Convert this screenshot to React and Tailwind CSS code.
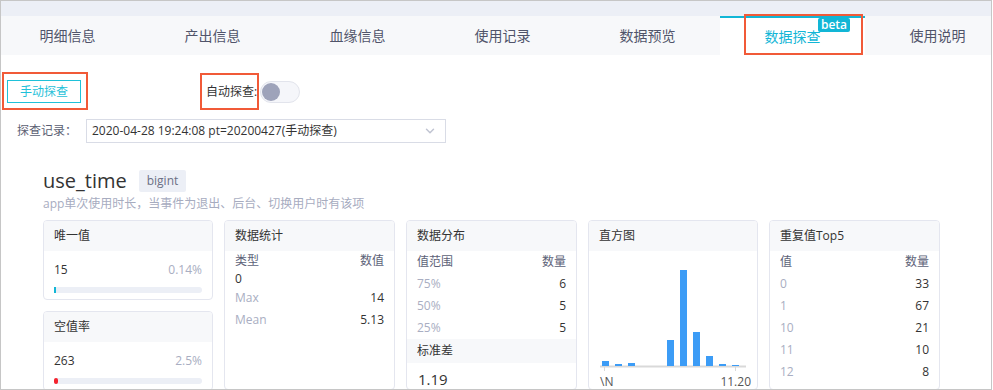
import React from "react";
import { ChevronDown } from "lucide-react";

const tabs = ["明细信息", "产出信息", "血缘信息", "使用记录", "数据预览", "数据探查", "使用说明"];

const bars = [
	{ x: 13, h: 5 },
	{ x: 26, h: 2 },
	{ x: 39, h: 3 },
	{ x: 78, h: 26 },
	{ x: 91, h: 96 },
	{ x: 104, h: 34 },
	{ x: 117, h: 10 },
	{ x: 130, h: 2 },
	{ x: 143, h: 1 },
];

const Card = ({ title, className = "", children }) => (
	<div className={`overflow-hidden rounded-[4px] border border-[#e4e6ef] bg-white ${className}`}>
		<div className="flex h-[30px] items-center bg-[#f7f8fa] px-[10px] text-[12px] text-[#333]">
			{title}
		</div>
		{children}
	</div>
);

const Row = ({ left, right, muted = true, className = "h-[22px]" }) => (
	<div className={`flex items-center justify-between text-[12px] ${className}`}>
		<span className={muted ? "text-[#a9aec2]" : "text-[#5d6278]"}>{left}</span>
		<span className={muted ? "text-[#333]" : "text-[#5d6278]"}>{right}</span>
	</div>
);

const Histogram = () => (
	<svg width="168" height="140" viewBox="0 0 168 140">
		<line x1="11" y1="115.5" x2="157" y2="115.5" stroke="#d9d9d9" strokeWidth="2" />
		<line x1="15.5" y1="116" x2="15.5" y2="120" stroke="#d9d9d9" />
		<line x1="146.5" y1="116" x2="146.5" y2="120" stroke="#d9d9d9" />
		{bars.map((b) => (
			<rect key={b.x} x={b.x} y={115 - b.h} width="7" height={b.h} fill="#3c9cf6" />
		))}
		<text x="11" y="135" fontSize="12" fill="#555" fontFamily="'Open Sans', sans-serif">\N</text>
		<text x="162" y="135" fontSize="12" fill="#555" textAnchor="end" fontFamily="'Open Sans', sans-serif">11.20</text>
	</svg>
);

const App = () => {
	return (
		<div
			className="relative h-[390px] w-[992px] overflow-hidden border border-[#c6c6c6] bg-white"
			style={{ fontFamily: "'Open Sans', 'Noto Sans CJK SC', sans-serif" }}
		>
			<div className="h-[15px] bg-[#eceff6]"></div>
			<div className="flex h-[39px] bg-[#f7f8fa] -ml-[6px]">
				{tabs.map((t, i) => (
					<div
						key={t}
						className={`relative flex w-[145px] shrink-0 items-center justify-center text-[14px] ${
							i === 5
								? "border-t-2 border-[#12b6d6] bg-white text-[#12b6d6]"
								: "text-[#50546a]"
						}`}
					>
						{t}
						{i === 5 && (
							<span className="absolute right-[15px] top-[0px] rounded-[2px] bg-[#12b6d6] px-[3px] text-[12px] font-semibold leading-[14px] text-white">
								beta
							</span>
						)}
					</div>
				))}
			</div>

			<div className="mt-[25px] flex items-center">
				<button className="ml-[6px] h-[23px] w-[74px] border border-[#1fc1d9] text-[12px] text-[#1fc1d9]">
					手动探查
				</button>
				<div className="ml-[125px] flex items-center">
					<span className="text-[12px] text-[#333]">自动探查:</span>
					<div className="ml-[3px] flex h-[22px] w-[40px] items-center rounded-full border border-[#e2e4ec] bg-[#f5f6fa] pl-[1px]">
						<div className="h-[18px] w-[18px] rounded-full bg-[#9ea3ba]"></div>
					</div>
				</div>
			</div>

			<div className="mt-[16px] flex items-center pl-[16px]">
				<span className="w-[69px] text-[12px] text-[#5a5e72]">探查记录：</span>
				<div className="flex h-[24px] w-[360px] items-center justify-between border border-[#d9dce6] pl-[5px] pr-[8px] text-[12px] text-[#333]">
					<span>2020-04-28 19:24:08 pt=20200427(手动探查)</span>
					<ChevronDown size={14} strokeWidth={2.5} className="text-[#c0c4d2]" />
				</div>
			</div>

			<div className="ml-[42px] mt-[26px] flex items-center">
				<span className="text-[20px] leading-[24px] text-[#333]">use_time</span>
				<span className="ml-[12px] flex h-[22px] items-center rounded-[2px] bg-[#eceff6] px-[8px] text-[12px] text-[#6b7085]">
					bigint
				</span>
			</div>
			<div className="ml-[42px] mt-[3px] text-[12px] leading-[16px] text-[#a7acbf]">
				app单次使用时长，当事件为退出、后台、切换用户时有该项
			</div>

			<div className="ml-[42px] mt-[8px] flex gap-[11px]">
				<div className="flex w-[170px] flex-col gap-[11px]">
					<Card title="唯一值">
						<div className="px-[10px] pb-[6px] pt-[12px]">
							<div className="flex items-center justify-between text-[12px] leading-[14px]">
								<span className="text-[#333]">15</span>
								<span className="text-[#a9aec2]">0.14%</span>
							</div>
							<div className="mt-[10px] flex h-[6px] rounded-full bg-[#eceff6]">
								<div className="h-full w-[2px] bg-[#12b6d6]"></div>
							</div>
						</div>
					</Card>
					<Card title="空值率">
						<div className="px-[10px] pb-[6px] pt-[12px]">
							<div className="flex items-center justify-between text-[12px] leading-[14px]">
								<span className="text-[#333]">263</span>
								<span className="text-[#a9aec2]">2.5%</span>
							</div>
							<div className="mt-[10px] flex h-[6px] rounded-full bg-[#eceff6]">
								<div className="h-full w-[4px] rounded-full bg-[#f5222d]"></div>
							</div>
						</div>
					</Card>
				</div>

				<Card title="数据统计" className="h-[170px] w-[171px]">
					<div className="px-[10px]">
						<Row left="类型" right="数值" muted={false} className="h-[20px]" />
						<div className="flex h-[16px] items-center text-[12px] text-[#333]">0</div>
						<Row left="Max" right="14" className="h-[22px]" />
						<Row left="Mean" right="5.13" className="h-[22px]" />
					</div>
				</Card>

				<Card title="数据分布" className="h-[170px] w-[171px]">
					<div className="px-[10px]">
						<Row left="值范围" right="数量" muted={false} />
						<Row left="75%" right="6" />
						<Row left="50%" right="5" />
						<Row left="25%" right="5" />
					</div>
					<div className="flex h-[24px] items-center bg-[#f7f8fa] px-[10px] text-[12px] text-[#333]">
						标准差
					</div>
					<div className="px-[11px] pt-[6px] text-[15px] leading-[20px] text-[#333]">1.19</div>
				</Card>

				<Card title="直方图" className="h-[170px] w-[170px]">
					<Histogram />
				</Card>

				<Card title="重复值Top5" className="h-[170px] w-[171px]">
					<div className="px-[10px]">
						<Row left="值" right="数量" muted={false} />
						<Row left="0" right="33" />
						<Row left="1" right="67" />
						<Row left="10" right="21" />
						<Row left="11" right="10" />
						<Row left="12" right="8" />
					</div>
				</Card>
			</div>

			{/* annotation boxes */}
			<div className="pointer-events-none absolute left-[1px] top-[71px] h-[38px] w-[86px] border-2 border-[#f15a38]"></div>
			<div className="pointer-events-none absolute left-[199px] top-[72px] h-[37px] w-[59px] border-2 border-[#f15a38]"></div>
			<div className="pointer-events-none absolute left-[743px] top-[13px] h-[41px] w-[119px] border-2 border-[#f15a38]"></div>
		</div>
	);
};

export default App;
